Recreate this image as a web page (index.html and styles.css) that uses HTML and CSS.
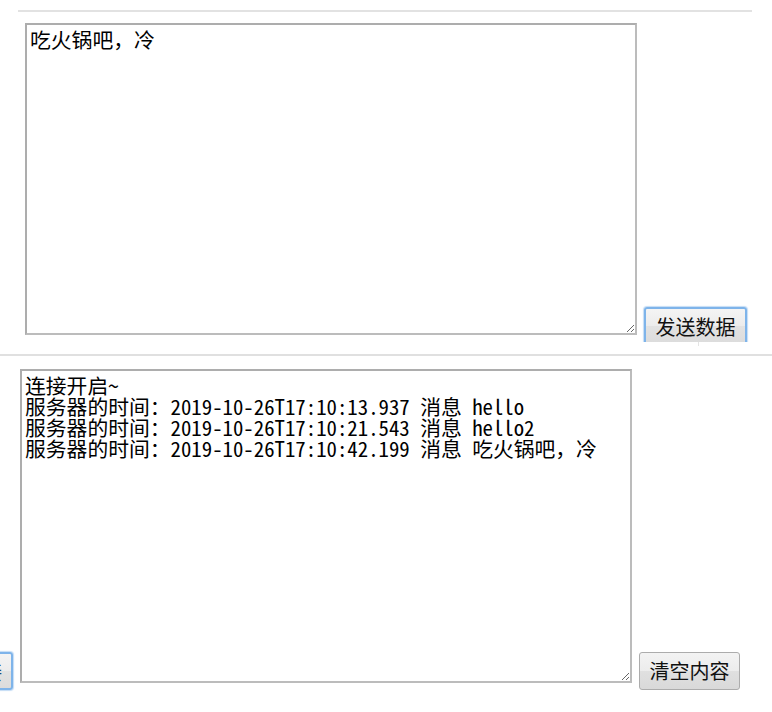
FILE: index.html
```html
<!DOCTYPE html>
<html lang="zh-CN">
<head>
  <meta charset="UTF-8" />
  <meta name="viewport" content="width=device-width, initial-scale=1.0" />
  <title>WebSocket 测试</title>
  <link rel="stylesheet" href="styles.css">
</head>
<body>
  <!-- send panel -->
  <section class="shot shot-send">
    <hr class="rule" />
    <div class="row row-send">
      <textarea class="box box-send" id="message">吃火锅吧，冷</textarea>
      <button class="btn btn-focus btn-send">发送数据</button>
    </div>
  </section>

  <!-- log panel -->
  <section class="shot shot-log">
    <div class="tick"></div>
    <hr class="rule rule-full" />
    <div class="row row-log">
      <button class="btn btn-focus btn-cut">连接</button>
      <textarea class="box box-log" id="responseText">连接开启~
服务器的时间：2019-10-26T17:10:13.937 消息 hello
服务器的时间：2019-10-26T17:10:21.543 消息 hello2
服务器的时间：2019-10-26T17:10:42.199 消息 吃火锅吧，冷</textarea>
      <button class="btn btn-clear">清空内容</button>
    </div>
  </section>
</body>
</html>
```

FILE: styles.css
```css
* {
  box-sizing: border-box;
}

body {
  margin: 0;
  background: #fff;
  color: #000;
  font-family: "Noto Sans CJK SC", sans-serif;
}

.shot {
  overflow: hidden;
}

.shot-send {
  height: 342px;
  padding-top: 10px;
}

.shot-log {
  height: 370px;
}

.rule {
  margin: 0 20px 0 18px;
  border: 0;
  height: 2px;
  background: #e2e2e2;
}

.rule-full {
  margin: 8px 0 0;
  background: #e0e0e0;
}

.tick {
  margin-left: 698px;
  width: 1px;
  height: 4px;
  background: #e4e4e4;
}

.row {
  display: flex;
  align-items: flex-end;
}

.row-send {
  margin-top: 11px;
  padding-left: 25px;
}

.row-log {
  margin-top: 13px;
}

/* text areas */
.box {
  margin: 0;
  padding: 4px 3px;
  border: 2px solid #bcbcbc;
  border-top-color: #adadad;
  border-left-color: #adadad;
  font-family: "Noto Sans Mono CJK SC", "Liberation Mono", "Noto Sans CJK SC", monospace;
  font-size: 20.8px;
  line-height: 21px;
  color: #000;
  background: #fff;
  outline: none;
}

.box-send {
  width: 612px;
  height: 312px;
}

.box-log {
  margin-left: 7px;
  width: 612px;
  height: 314px;
}

/* buttons */
.btn {
  height: 38px;
  padding: 0 9px;
  border: 1px solid #acacac;
  border-radius: 3px;
  background: linear-gradient(#f3f3f3, #ececec 50%, #e0e0e0 51%, #d9d9d9);
  font-family: "Noto Sans CJK SC", sans-serif;
  font-size: 20px;
  line-height: 36px;
  color: #111;
  white-space: nowrap;
}

.btn-focus {
  border: 2px solid #7eb4ea;
  box-shadow: 0 0 1px 1px #c4dcf5;
  background: linear-gradient(#f4f4f4, #ececec 50%, #e2e2e2 51%, #dcdcdc);
}

.btn-send {
  margin-left: 7px;
  margin-bottom: -10px;
  width: 103px;
}

.btn-clear {
  margin-left: 7px;
  margin-bottom: -7px;
  width: 101px;
}

.btn-cut {
  flex: none;
  width: 90px;
  margin-left: -77px;
  margin-bottom: -7px;
  color: #1a4a7a;
  text-align: right;
}
```
